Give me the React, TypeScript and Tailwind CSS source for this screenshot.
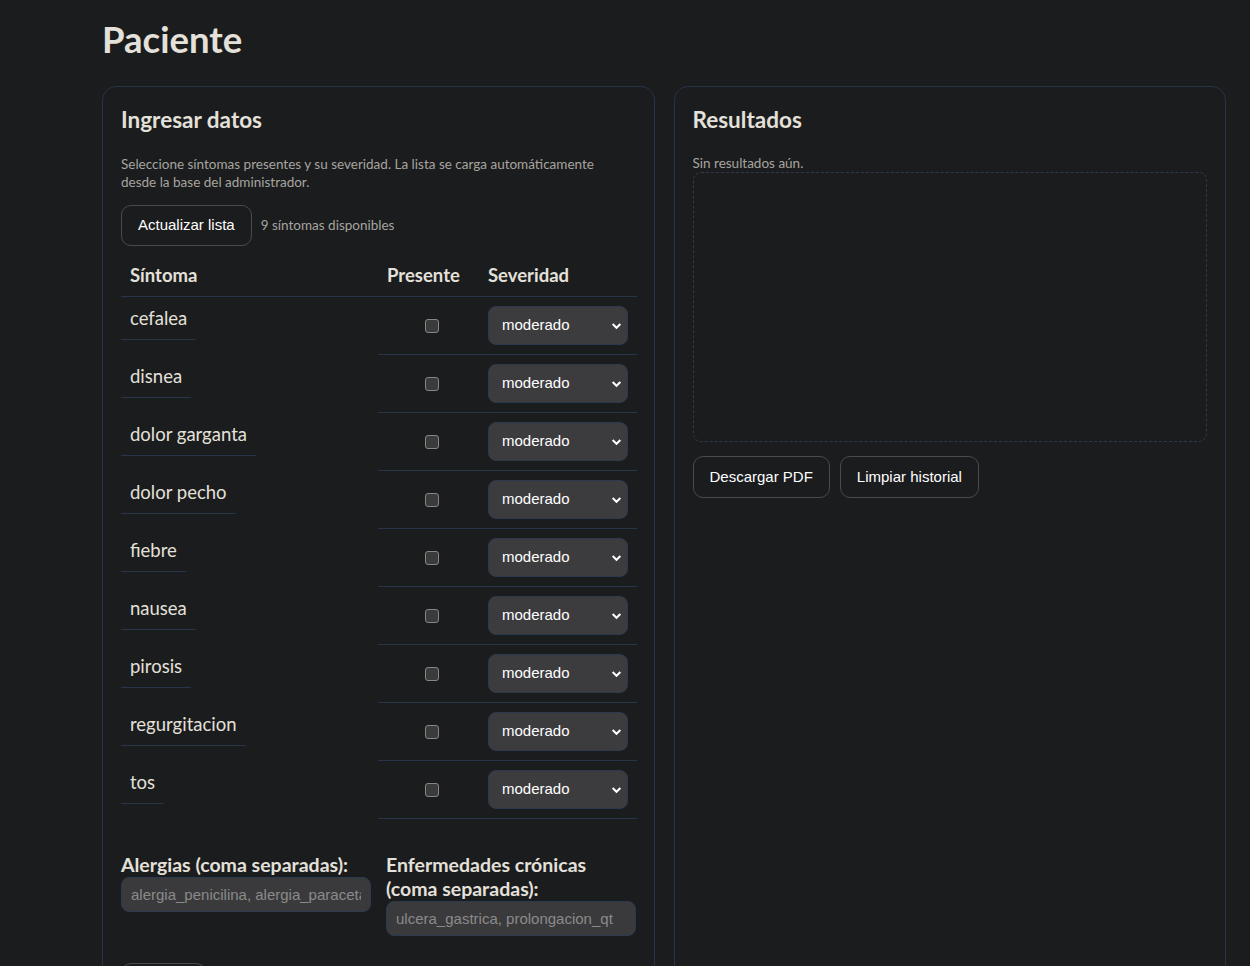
import { useState } from "react";

const sintomas = [
  "cefalea",
  "disnea",
  "dolor garganta",
  "dolor pecho",
  "fiebre",
  "nausea",
  "pirosis",
  "regurgitacion",
  "tos",
];

const ui = { fontFamily: "Lato, 'Noto Sans', sans-serif" };
const arial = { fontFamily: "'Liberation Sans', Arial, sans-serif" };

function Chevron() {
  return (
    <svg width="11" height="11" viewBox="0 0 10 10" className="pointer-events-none absolute right-[6px] top-1/2 -translate-y-1/2">
      <path d="M1.5 3.2 L5 6.6 L8.5 3.2" fill="none" stroke="#ffffff" strokeWidth="1.8" />
    </svg>
  );
}

export default function App() {
  const [presentes, setPresentes] = useState<Record<string, boolean>>({});

  return (
    <div className="min-h-screen bg-[#1b1c1e] text-[#e4e0da] pl-[102px] pr-[24px] pt-[12px]" style={ui}>
      <h1 className="text-[36.5px] font-bold leading-[54px] mb-[20px]">Paciente</h1>

      <div className="grid grid-cols-2 gap-[19px]">
        {/* Ingresar datos */}
        <section className="border border-[#253447] rounded-[14px] px-[18px] pt-[18px] pb-[40px]">
          <h2 className="text-[22.5px] font-bold leading-[30px]">Ingresar datos</h2>
          <p className="mt-[20px] max-w-[492px] text-[13.5px] leading-[18px] text-[#a7a49f]">
            Seleccione síntomas presentes y su severidad. La lista se carga automáticamente desde la base del administrador.
          </p>

          <div className="mt-[14px] flex items-center gap-[9px]">
            <button className="h-[41px] px-[16px] rounded-[10px] border border-[#4a4a4a] text-white text-[15px]" style={arial}>
              Actualizar lista
            </button>
            <span className="text-[13.5px] text-[#a7a49f]">9 síntomas disponibles</span>
          </div>

          <div className="mt-[8px] grid grid-cols-[257px_101px_158px]">
            <div className="px-[9px] py-[9px] text-[18.5px] leading-[24px] font-bold border-b border-[#263548]">Síntoma</div>
            <div className="px-[9px] py-[9px] text-[18.5px] leading-[24px] font-bold border-b border-[#263548]">Presente</div>
            <div className="px-[9px] py-[9px] text-[18.5px] leading-[24px] font-bold border-b border-[#263548]">Severidad</div>

            {sintomas.map((s) => (
              <div key={s} className="contents">
                <div>
                  <span className="inline-block px-[9px] py-[9px] text-[18.5px] leading-[24px] border-b border-[#263548]">{s}</span>
                </div>
                <div className="flex items-center justify-center pl-[7px] border-b border-[#263548]">
                  <input
                    type="checkbox"
                    checked={!!presentes[s]}
                    onChange={(e) => setPresentes({ ...presentes, [s]: e.target.checked })}
                    className="appearance-none w-[14px] h-[14px] rounded-[3px] border border-[#858585] bg-[#3b3b3b]"
                  />
                </div>
                <div className="p-[9px] border-b border-[#263548]">
                  <div className="relative">
                    <select
                      defaultValue="moderado"
                      className="appearance-none w-[140px] h-[39px] pl-[13px] rounded-[8px] bg-[#3c3c3e] border border-[#2b3a4e] text-white text-[15px] outline-none"
                      style={arial}
                    >
                      <option value="leve">leve</option>
                      <option value="moderado">moderado</option>
                      <option value="severo">severo</option>
                    </select>
                    <Chevron />
                  </div>
                </div>
              </div>
            ))}
          </div>

          <div className="mt-[34px] grid grid-cols-[250px_250px] gap-x-[15px] items-start">
            <label className="block">
              <span className="block text-[19.5px] leading-[24px] font-bold">Alergias (coma separadas):</span>
              <input
                placeholder="alergia_penicilina, alergia_paracetamol"
                className="w-full h-[35px] px-[9px] rounded-[8px] bg-[#3a3a3c] border border-[#2b3a4e] text-[15px] text-white placeholder-[#8a8a8a] outline-none"
                style={arial}
              />
            </label>
            <label className="block">
              <span className="block text-[19.5px] leading-[24px] font-bold">Enfermedades crónicas (coma separadas):</span>
              <input
                placeholder="ulcera_gastrica, prolongacion_qt"
                className="w-full h-[35px] px-[9px] rounded-[8px] bg-[#3a3a3c] border border-[#2b3a4e] text-[15px] text-white placeholder-[#8a8a8a] outline-none"
                style={arial}
              />
            </label>
          </div>

          <button className="mt-[27px] h-[41px] px-[16px] rounded-[10px] border border-[#4a4a4a] text-white text-[15px]" style={arial}>
            Evaluar
          </button>
        </section>

        {/* Resultados */}
        <section className="border border-[#253447] rounded-[14px] px-[18px] pt-[18px] pb-[18px]">
          <h2 className="text-[22.5px] font-bold leading-[30px]">Resultados</h2>
          <p className="mt-[20px] text-[13.5px] leading-[17px] text-[#a7a49f]">Sin resultados aún.</p>
          <div className="h-[270px] rounded-[8px] border border-dashed border-[#2b3a4d]"></div>
          <div className="mt-[14px] flex gap-[10px]">
            <button className="h-[42px] px-[16px] rounded-[10px] border border-[#4a4a4a] text-white text-[15px]" style={arial}>
              Descargar PDF
            </button>
            <button className="h-[42px] px-[16px] rounded-[10px] border border-[#4a4a4a] text-white text-[15px]" style={arial}>
              Limpiar historial
            </button>
          </div>
        </section>
      </div>
    </div>
  );
}
